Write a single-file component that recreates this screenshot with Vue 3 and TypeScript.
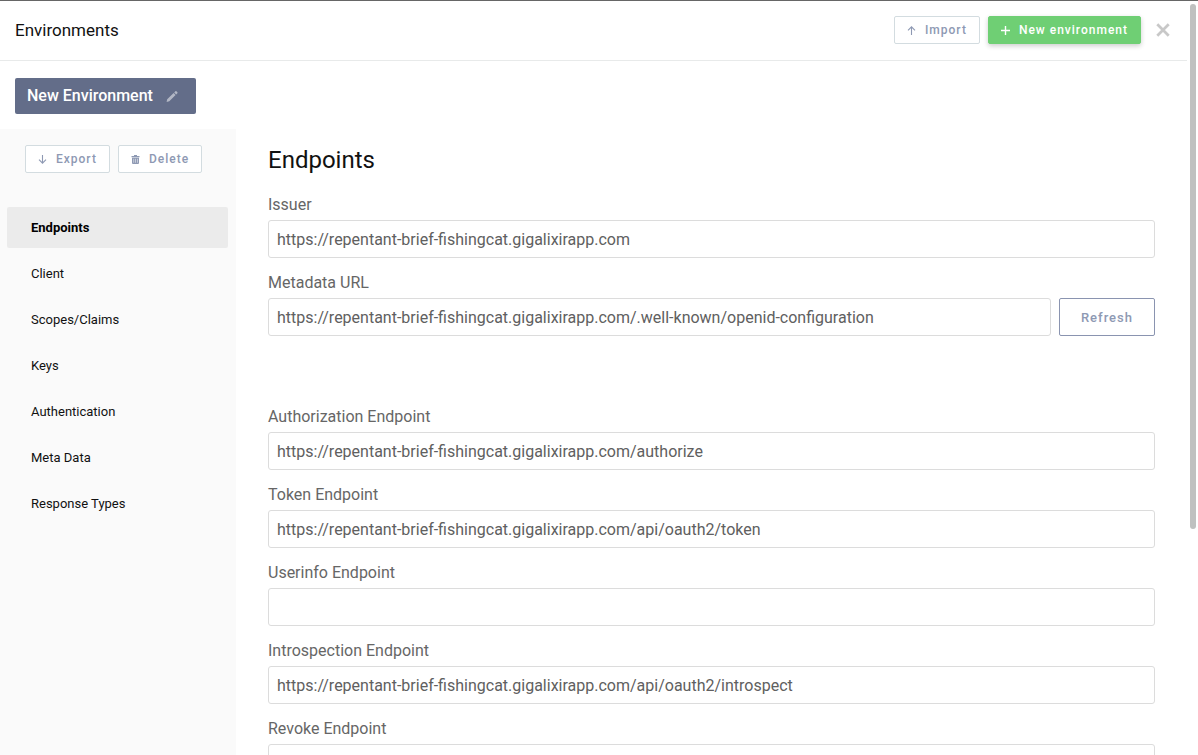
<script setup lang="ts">
import { ref } from 'vue'

interface Field {
  id: string
  label: string
  value: string
  refreshable?: boolean
}

const sections: string[] = [
  'Endpoints',
  'Client',
  'Scopes/Claims',
  'Keys',
  'Authentication',
  'Meta Data',
  'Response Types',
]
const active = ref('Endpoints')

const base = 'https://repentant-brief-fishingcat.gigalixirapp.com'
const fields = ref<Field[]>([
  { id: 'issuer', label: 'Issuer', value: base },
  {
    id: 'metadata',
    label: 'Metadata URL',
    value: `${base}/.well-known/openid-configuration`,
    refreshable: true,
  },
  { id: 'authorization', label: 'Authorization Endpoint', value: `${base}/authorize` },
  { id: 'token', label: 'Token Endpoint', value: `${base}/api/oauth2/token` },
  { id: 'userinfo', label: 'Userinfo Endpoint', value: '' },
  { id: 'introspection', label: 'Introspection Endpoint', value: `${base}/api/oauth2/introspect` },
  { id: 'revoke', label: 'Revoke Endpoint', value: '' },
])
</script>

<template>
  <div class="panel">
    <header class="header">
      <div class="title">Environments</div>
      <button type="button" class="btn">
        <svg class="icon" viewBox="0 0 10 10" aria-hidden="true">
          <path d="M4.5 10V2M1 5.300L4.500 1.800L8 5.300" />
        </svg>
        Import
      </button>
      <button type="button" class="btn btn-success">
        <svg class="icon plus" viewBox="0 0 10 10" aria-hidden="true">
          <path d="M4.500 1v9M0 5.500h9" />
        </svg>
        New environment
      </button>
      <button type="button" class="close" aria-label="Close">
        <svg viewBox="0 0 14 14" aria-hidden="true"><path d="M2 2l10 10M12 2L2 12" /></svg>
      </button>
    </header>

    <div class="env-bar">
      <button type="button" class="env-tab">
        New Environment
        <svg viewBox="0 0 12 12" aria-hidden="true">
          <path d="M.6 12l.6-2.800L7.600 3l2 2L3.300 11.200zM8.200 2.400L9.400 1.300q.5-.4 1 0l1 1q.4.500 0 1L10.200 4.400z" />
        </svg>
      </button>
    </div>

    <div class="body">
      <aside class="sidebar">
        <div class="actions">
          <button type="button" class="btn">
            <svg class="icon" viewBox="0 0 10 10" aria-hidden="true">
              <path d="M4.500 1v8M1 5.700L4.500 9.200L8 5.700" />
            </svg>
            Export
          </button>
          <button type="button" class="btn">
            <svg class="icon solid" viewBox="0 0 10 10" aria-hidden="true">
              <path
                fill-rule="evenodd"
                d="M3 1h3v1h2.500v1.300H.5V2H3zM1 3.800h7V9q0 1-1 1H2q-1 0-1-1zM2.600 4.800v4h.5v-4zM4.300 4.800v4h.5v-4zM6 4.800v4h.5v-4z"
              />
            </svg>
            Delete
          </button>
        </div>
        <nav class="nav">
          <a
            v-for="name in sections"
            :key="name"
            href="#"
            :class="{ active: active === name }"
            @click.prevent="active = name"
            >{{ name }}</a
          >
        </nav>
      </aside>

      <main class="content">
        <h1>Endpoints</h1>
        <div
          v-for="field in fields"
          :key="field.id"
          class="field"
          :class="{ spaced: field.refreshable }"
        >
          <label :for="field.id">{{ field.label }}</label>
          <div class="row">
            <input :id="field.id" v-model="field.value" type="text" spellcheck="false" />
            <button v-if="field.refreshable" type="button" class="refresh">Refresh</button>
          </div>
        </div>
      </main>
    </div>
    <div class="scroll-thumb"></div>
  </div>
</template>

<style>
body {
  background: #fff;
}
</style>

<style scoped>
* {
  box-sizing: border-box;
}
.panel {
  position: relative;
  display: flex;
  flex-direction: column;
  height: 100vh;
  overflow: hidden;
  border-top: 1px solid #666;
  font-family: Roboto, sans-serif;
  font-size: 16px;
  color: #111;
}
button {
  font-family: inherit;
  cursor: pointer;
}
.header {
  display: flex;
  align-items: center;
  flex: none;
  margin-right: 11px;
  padding: 15px 16px 16px 15px;
  border-bottom: 1px solid #e8eaea;
}
.title {
  flex: 1;
  font-size: 17px;
  line-height: 28px;
}
.btn {
  display: inline-flex;
  align-items: center;
  gap: 8px;
  height: 28px;
  padding: 0 12px;
  border: 1px solid #d3dce0;
  border-radius: 2px;
  background: #fff;
  color: #8e99b3;
  font-size: 12px;
  font-weight: 500;
  letter-spacing: 1px;
  white-space: nowrap;
}
.btn-success {
  margin: 0 14px 0 8px;
  border-color: #6fcf74;
  background: #6fcf74;
  color: #fff;
  box-shadow: 0 2px 5px rgba(0, 0, 0, 0.2);
}
.icon {
  width: 10px;
  height: 10px;
  fill: none;
  stroke: currentColor;
  stroke-width: 1.1;
}
.icon.plus {
  overflow: visible;
  stroke-width: 1.4;
}
.icon.solid {
  fill: currentColor;
  stroke: none;
}
.close {
  display: flex;
  padding: 0;
  border: 0;
  background: none;
}
.close svg {
  width: 16px;
  height: 16px;
  stroke: #c8c8c8;
  stroke-width: 2.4;
}
.env-bar {
  flex: none;
  padding: 17px 15px 15px;
}
.env-tab {
  display: flex;
  align-items: center;
  gap: 13px;
  height: 36px;
  padding: 0 18px 0 12px;
  border: 0;
  border-radius: 2px;
  background: #636d89;
  color: #fff;
  font-size: 16px;
  font-weight: 500;
  line-height: 20px;
}
.env-tab svg {
  width: 12px;
  height: 12px;
  fill: #b2b7c5;
}
.body {
  display: flex;
  flex: 1;
  min-height: 0;
}
.sidebar {
  flex: none;
  width: 236px;
  padding: 16px 8px 0 7px;
  background: #fafafa;
}
.actions {
  display: flex;
  gap: 8px;
  padding-left: 18px;
}
.nav {
  display: flex;
  flex-direction: column;
  gap: 5px;
  margin-top: 34px;
}
.nav a {
  padding: 0 24px;
  border-radius: 2px;
  color: #111;
  font-size: 13px;
  line-height: 41px;
  text-decoration: none;
}
.nav a.active {
  background: #ebebeb;
  color: #000;
  font-weight: 700;
}
.content {
  flex: 1;
  min-width: 0;
  padding: 16px 43px 0 32px;
}
h1 {
  margin: 0 0 20px;
  font-size: 24px;
  font-weight: 400;
  line-height: 30px;
}
.field {
  margin-bottom: 15px;
}
.field.spaced {
  margin-bottom: 71px;
}
label {
  display: block;
  margin-bottom: 5px;
  color: #666;
  line-height: 20px;
}
.row {
  display: flex;
  gap: 8px;
}
input {
  flex: 1;
  min-width: 0;
  height: 38px;
  padding: 0 8px;
  border: 1px solid #dcdcdc;
  border-radius: 3px;
  background: #fff;
  color: #606060;
  font-family: inherit;
  font-size: 16px;
  outline: 0;
}
.refresh {
  padding: 0 21px;
  border: 1px solid #8a94b0;
  border-radius: 2px;
  background: #fff;
  color: #8e99b3;
  font-size: 13px;
  font-weight: 500;
  letter-spacing: 1px;
}
.scroll-thumb {
  position: absolute;
  top: 3px;
  right: 2px;
  width: 6px;
  height: calc(70% - 3px);
  border-radius: 3px;
  background: #bfc1c0;
}
</style>
